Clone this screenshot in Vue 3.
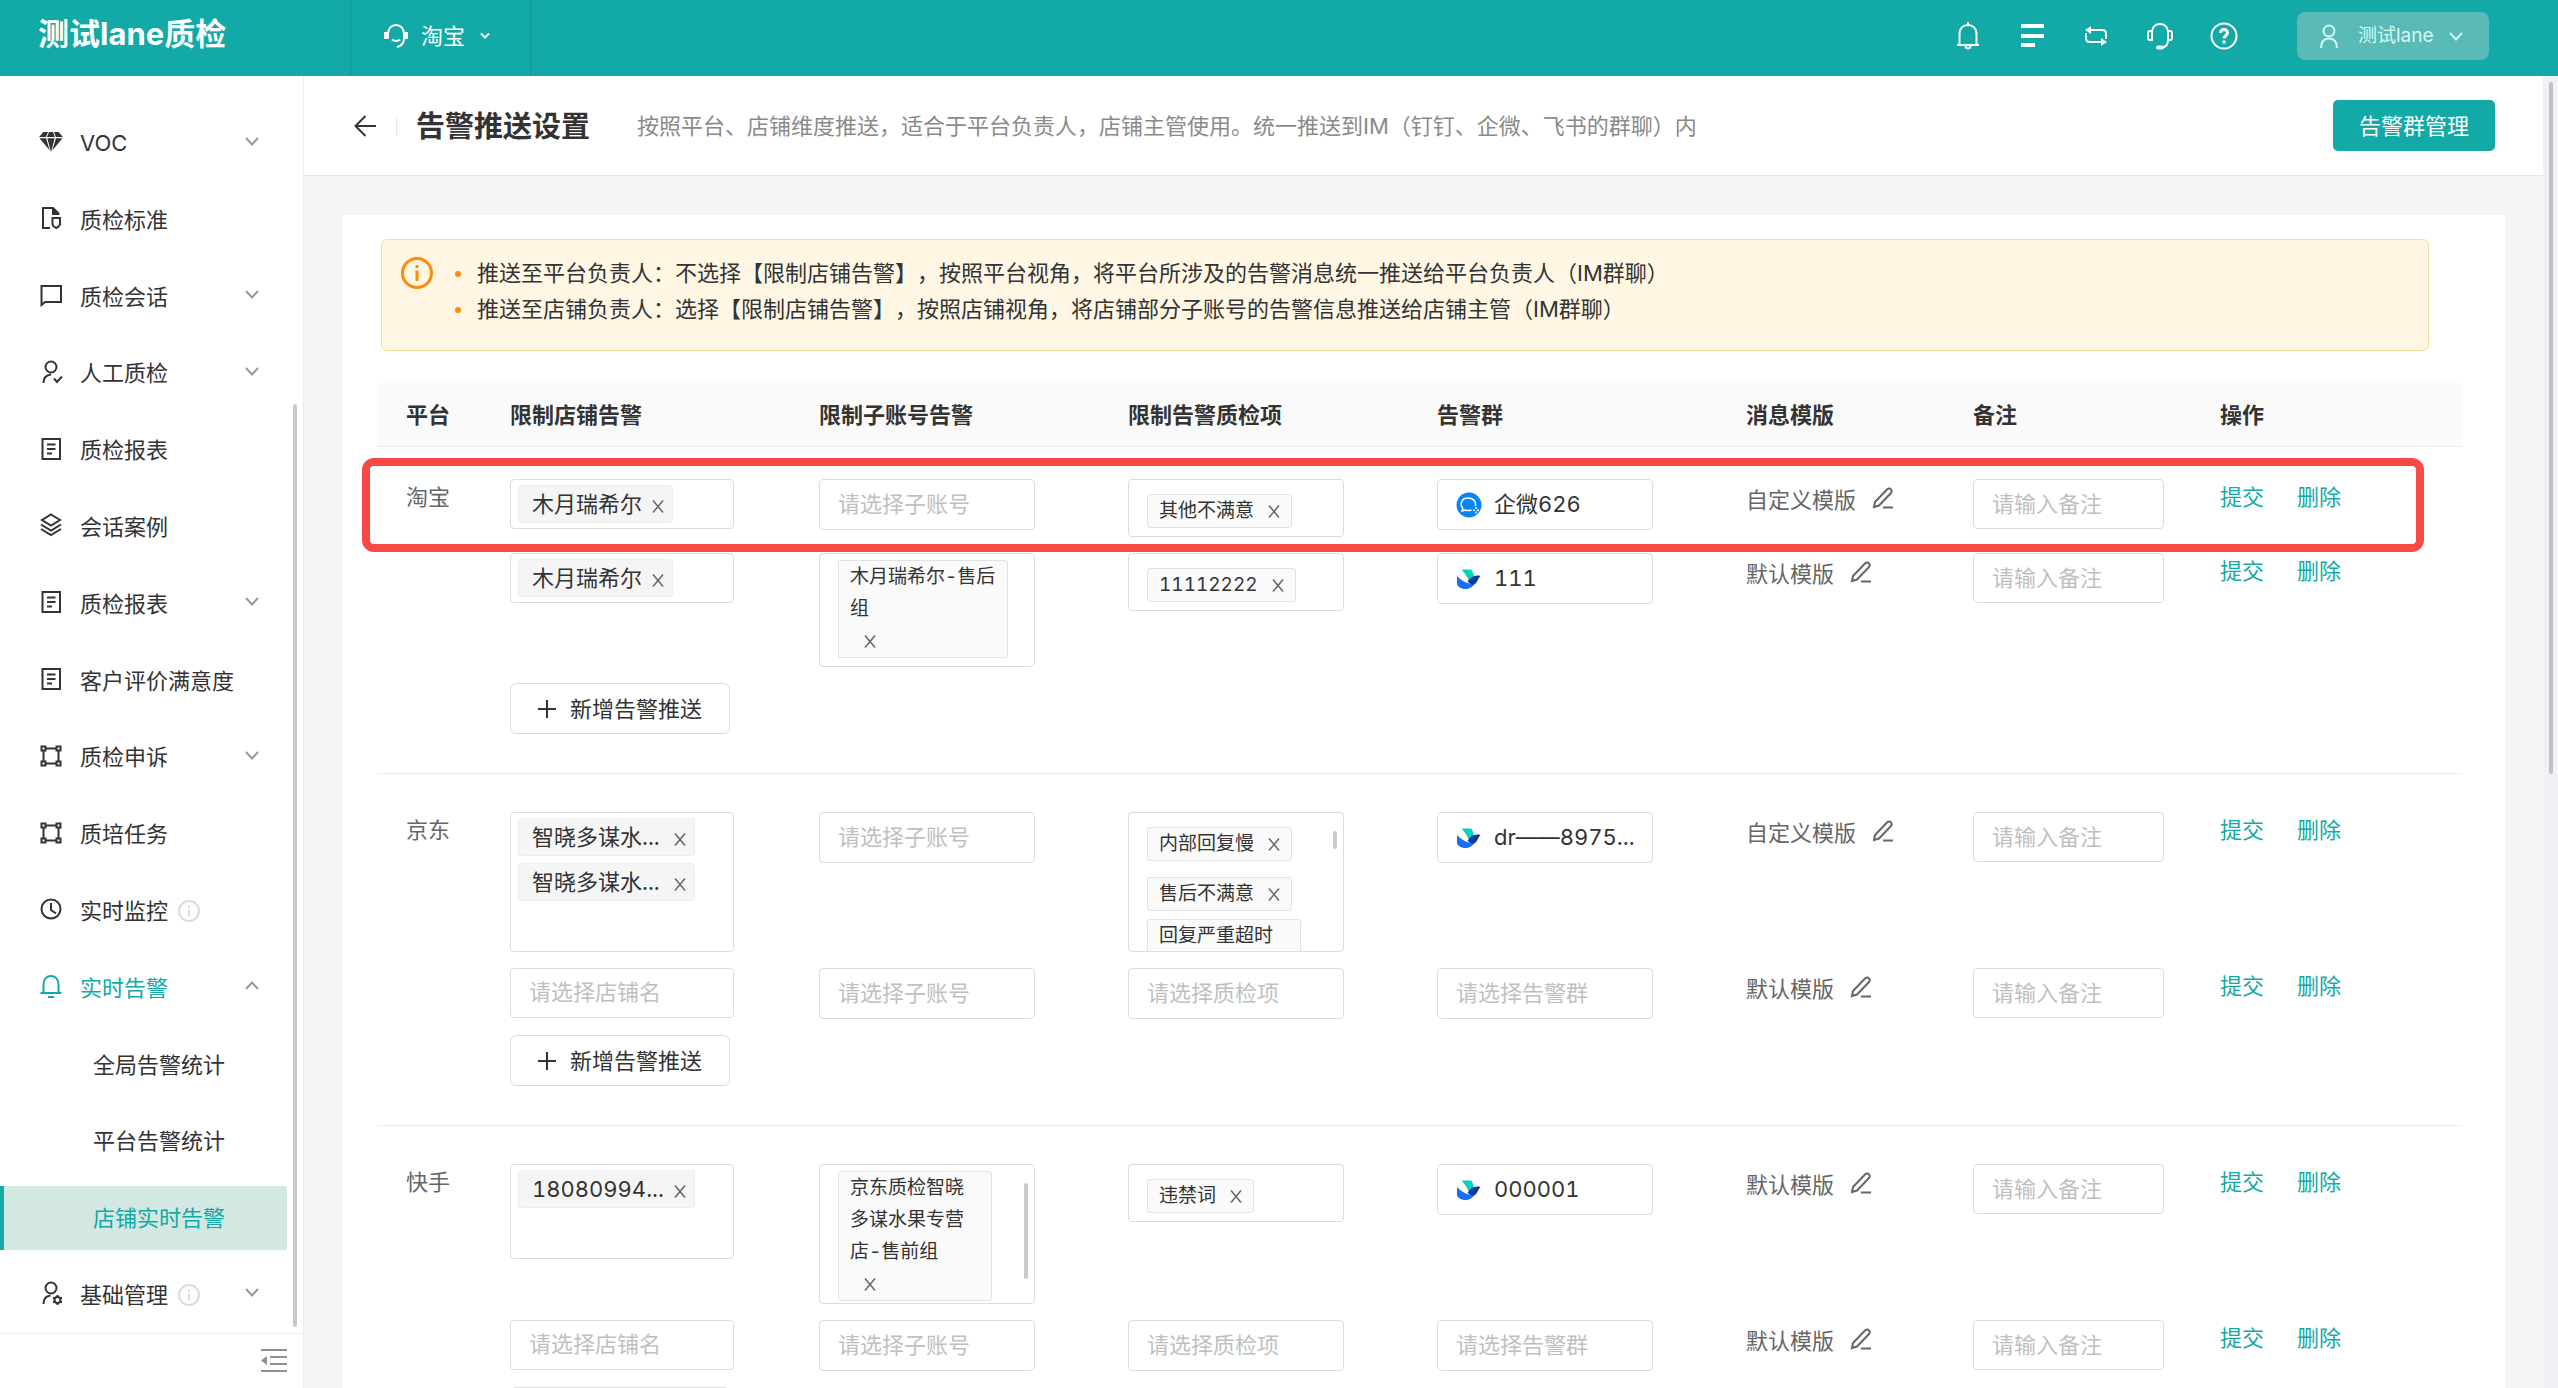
<script setup>
const menu = [
  { label: 'VOC', icon: 'diamond', arrow: 'down' },
  { label: '质检标准', icon: 'docShield' },
  { label: '质检会话', icon: 'chat', arrow: 'down' },
  { label: '人工质检', icon: 'userCheck', arrow: 'down' },
  { label: '质检报表', icon: 'report' },
  { label: '会话案例', icon: 'layers' },
  { label: '质检报表', icon: 'report', arrow: 'down' },
  { label: '客户评价满意度', icon: 'report' },
  { label: '质检申诉', icon: 'frame', arrow: 'down' },
  { label: '质培任务', icon: 'frame' },
  { label: '实时监控', icon: 'clock', info: true },
  { label: '实时告警', icon: 'alarm', arrow: 'up', open: true },
  { label: '全局告警统计', sub: true },
  { label: '平台告警统计', sub: true },
  { label: '店铺实时告警', sub: true, active: true },
  { label: '基础管理', icon: 'userGear', arrow: 'down', info: true },
]

const icons = {
  diamond:
    '<path fill="currentColor" d="M4.500 2H9L7 7H0zM10 2h4l2 5H8zM15 2h4.500L24 7h-7zM.5 8.300H7L10.800 20.500zM8.300 8.300h7.400L12 22zM17 8.300h6.500L13.200 20.500z"/>',
  docShield:
    '<path fill="none" stroke="currentColor" stroke-width="2" d="M11 22H4V2h10l6 6"/><path fill="currentColor" d="M13 1l8 8h-8z"/><path fill="none" stroke="currentColor" stroke-width="2" d="M13.500 12H21v6c0 2-2 3-3.700 4-1.800-1-3.800-2-3.800-4z"/>',
  chat: '<path fill="none" stroke="currentColor" stroke-width="2" d="M2.500 3h19.500v16H6l-3.500 3z"/>',
  userCheck:
    '<g fill="none" stroke="currentColor" stroke-width="2"><circle cx="12" cy="7" r="5.500"/><path d="M4.500 23c0-5 2.500-8 7.500-8.500M15 18.500l3 3.500 5-5.500"/></g>',
  report:
    '<g fill="none" stroke="currentColor" stroke-width="2"><path d="M3.500 2h17.500v20H3.500z"/><path d="M8 7.500h8.500M8 12h8.500M8 16.500h5"/></g>',
  layers:
    '<g fill="none" stroke="currentColor" stroke-width="2"><path d="M12 1.500l9 5.500-9 5.500L3 7z"/><path d="M2 11.500l10 6 10-6M2 16l10 6 10-6"/></g>',
  frame:
    '<g fill="none" stroke="currentColor" stroke-width="2"><path d="M2.500 2.500h4v4h-4zM17.500 2.500h4v4h-4zM2.500 17.500h4v4h-4zM17.500 17.500h4v4h-4zM6.500 4.500h11M6.500 19.500h11M4.500 6.500v11M19.500 6.500v11"/></g>',
  clock:
    '<g fill="none" stroke="currentColor" stroke-width="2"><circle cx="12" cy="12" r="9.500"/><path d="M12 6v7l5 3.500"/></g>',
  alarm:
    '<g fill="none" stroke="currentColor" stroke-width="2"><path d="M4.500 18v-8c0-5 3.500-8 7.500-8s7.500 3 7.500 8v8M1.500 19h21M9 23h6"/></g>',
  userGear:
    '<g fill="none" stroke="currentColor" stroke-width="2"><circle cx="12" cy="7" r="5.500"/><path d="M4.500 23c0-5 2.500-8 7-8.500"/><circle cx="18.500" cy="19" r="3"/><path d="M18.500 14v2M18.500 22v2M14 16.500l1.800 1M21.200 20.500l1.800 1M14 21.500l1.800-1M21.200 17.500l1.800-1"/></g>',
}

const S = '请选择店铺名'
const A = '请选择子账号'
const Q = '请选择质检项'
const G = '请选择告警群'

const groups = [
  {
    name: '淘宝',
    rows: [
      {
        shops: ['木月瑞希尔'],
        accounts: [],
        checks: [{ t: '其他不满意' }],
        chat: { kind: 'wecom', t: '企微626' },
        tpl: '自定义模版',
      },
      {
        shops: ['木月瑞希尔'],
        accounts: [{ t: '木月瑞希尔-售后组', multi: true }],
        checks: [{ t: '11112222' }],
        chat: { kind: 'lark', t: '111' },
        tpl: '默认模版',
      },
    ],
  },
  {
    name: '京东',
    rows: [
      {
        shops: ['智晓多谋水...', '智晓多谋水...'],
        shopSize: 'tall',
        accounts: [],
        checks: [{ t: '内部回复慢' }, { t: '售后不满意' }, { t: '回复严重超时', multi: true }],
        checkScroll: 'short',
        chat: { kind: 'lark', t: 'dr——8975...' },
        tpl: '自定义模版',
      },
      { shops: [], accounts: [], checks: [], tpl: '默认模版' },
    ],
  },
  {
    name: '快手',
    rows: [
      {
        shops: ['18080994...'],
        shopSize: 'mid',
        accounts: [{ t: '京东质检智晓多谋水果专营店-售前组', multi: true }],
        accountScroll: 'long',
        checks: [{ t: '违禁词' }],
        chat: { kind: 'lark', t: '000001' },
        tpl: '默认模版',
      },
      { shops: [], accounts: [], checks: [], tpl: '默认模版' },
    ],
  },
]
</script>

<template>
  <div class="app">
    <header class="topbar">
      <div class="brand">测试lane质检</div>
      <button class="platform" type="button">
        <svg class="i24" viewBox="0 0 24 24" fill="none" stroke="currentColor" stroke-width="2">
          <path d="M4 14.500V9.500C4 4.500 7.500 1 12 1s8 3.500 8 8.500v5c0 4.500-3 7.500-7 8.500" />
          <path d="M8 15.500c2 2 6 2 8 0" />
          <path d="M2 8v7M22 8v7" stroke-width="4" />
        </svg>
        <span>淘宝</span>
        <svg class="caret" viewBox="0 0 10 8" fill="none" stroke="currentColor" stroke-width="2"><path d="M1 1.500l4 4 4-4" /></svg>
      </button>
      <nav class="tools">
        <button type="button" aria-label="通知">
          <svg viewBox="0 0 28 28" fill="none" stroke="currentColor" stroke-width="2">
            <path d="M14 0v3M5.500 22V11.500C5.500 6.500 9 3 14 3s8.500 3.500 8.500 8.500V22M3 23h22M11.500 23.500a2.500 3 0 0 0 5 0" />
          </svg>
        </button>
        <button type="button" aria-label="列表">
          <svg viewBox="0 0 28 28" fill="currentColor"><path d="M3 2h23v4H3zM3 12h23v4H3zM3 21h14v4H3z" /></svg>
        </button>
        <button type="button" aria-label="切换">
          <svg viewBox="0 0 28 28" fill="none" stroke="currentColor" stroke-width="2">
            <path d="M7 8h13c3 0 4 2 4 4v5M21 20H8c-3 0-4-2-4-4v-5" />
            <path fill="currentColor" stroke="none" d="M3 8l6-4v8zM25 20l-6-4v8z" />
          </svg>
        </button>
        <button type="button" aria-label="客服">
          <svg viewBox="0 0 28 28" fill="none" stroke="currentColor" stroke-width="2">
            <path d="M6 18V10c0-5 3.500-8 8-8s8 3 8 8v8c0 4-2 7-6 7.500" />
            <path d="M6 9H4c-1.500 0-2 1-2 2v5c0 1 .5 2 2 2h2zM22 9h2c1.500 0 2 1 2 2v5c0 1-.5 2-2 2h-2z" />
            <path d="M12 25.500h4" stroke-width="4" stroke-linecap="round" />
          </svg>
        </button>
        <button type="button" aria-label="帮助">
          <svg viewBox="0 0 28 28" fill="none" stroke="currentColor" stroke-width="3">
            <circle cx="14" cy="14" r="12.500" stroke-width="2" />
            <path d="M10.500 11c0-2 1.500-3.500 3.500-3.500s3.500 1.500 3.500 3.300c0 2.700-3.500 2.700-3.500 5.700M14 18.500v3" />
          </svg>
        </button>
      </nav>
      <button class="account" type="button">
        <svg class="i24" viewBox="0 0 24 24" fill="none" stroke="currentColor" stroke-width="2">
          <circle cx="12" cy="7" r="5.500" />
          <path d="M4 24c0-6 3-9.500 8-9.500s8 3.500 8 9.500" />
        </svg>
        <span>测试lane</span>
        <svg class="chev" viewBox="0 0 14 9" fill="none" stroke="currentColor" stroke-width="2"><path d="M1 1l6 6.500L13 1" /></svg>
      </button>
    </header>

    <div class="body">
      <aside class="side">
        <nav class="menu">
          <a
            v-for="(m, i) in menu"
            :key="i"
            href="#"
            class="item"
            :class="{ sub: m.sub, active: m.active, open: m.open }"
          >
            <svg v-if="m.icon" class="i24" viewBox="0 0 24 24" v-html="icons[m.icon]"></svg>
            <span>{{ m.label }}</span>
            <svg v-if="m.info" class="info" viewBox="0 0 22 22" fill="none" stroke="currentColor" stroke-width="2">
              <circle cx="11" cy="11" r="10" /><path d="M11 9.500V16M11 5.500v2" />
            </svg>
            <svg v-if="m.arrow" class="arrow" viewBox="0 0 14 9" fill="none" stroke="currentColor" stroke-width="2">
              <path :d="m.arrow === 'up' ? 'M1 8l6-6.500L13 8' : 'M1 1l6 6.500L13 1'" />
            </svg>
          </a>
        </nav>
        <span class="side-thumb"></span>
        <div class="side-foot">
          <button type="button" aria-label="收起菜单">
            <svg viewBox="0 0 26 24" fill="currentColor">
              <path d="M0 0h26v2H0zM9 7h17v2H9zM9 14h17v2H9zM0 21h26v2H0zM0 11.500l6-4.500v9z" />
            </svg>
          </button>
        </div>
      </aside>

      <main class="main">
        <div class="page-head">
          <button class="back" type="button" aria-label="返回">
            <svg viewBox="0 0 22 22" fill="none" stroke="currentColor" stroke-width="2"><path d="M22 11H2M11.500 1L1.500 11l10 10" /></svg>
          </button>
          <span class="rule"></span>
          <h1>告警推送设置</h1>
          <p>按照平台、店铺维度推送，适合于平台负责人，店铺主管使用。统一推送到IM（钉钉、企微、飞书的群聊）内</p>
          <button class="primary" type="button">告警群管理</button>
        </div>

        <section class="card">
          <div class="notice">
            <svg viewBox="0 0 32 32" fill="none" stroke="currentColor">
              <circle cx="16" cy="16" r="14.500" stroke-width="3" />
              <path d="M16 13.500V24M16 8v3" stroke-width="3" />
            </svg>
            <ul>
              <li>推送至平台负责人：不选择【限制店铺告警】，按照平台视角，将平台所涉及的告警消息统一推送给平台负责人（IM群聊）</li>
              <li>推送至店铺负责人：选择【限制店铺告警】，按照店铺视角，将店铺部分子账号的告警信息推送给店铺主管（IM群聊）</li>
            </ul>
          </div>

          <div class="table-wrap">
            <table>
              <colgroup>
                <col class="c-plat" /><col class="c-box" /><col class="c-box" /><col class="c-box" />
                <col class="c-box" /><col class="c-tpl" /><col class="c-note" /><col class="c-act" />
              </colgroup>
              <thead>
                <tr>
                  <th>平台</th><th>限制店铺告警</th><th>限制子账号告警</th><th>限制告警质检项</th>
                  <th>告警群</th><th>消息模版</th><th>备注</th><th>操作</th>
                </tr>
              </thead>
              <tbody v-for="g in groups" :key="g.name">
                <tr v-for="(r, i) in g.rows" :key="i">
                  <td>{{ i === 0 ? g.name : '' }}</td>
                  <td>
                    <div v-if="r.shops.length" class="box shop" :class="r.shopSize">
                      <span v-for="(s, k) in r.shops" :key="k" class="shop-tag">
                        <span>{{ s }}</span>
                        <button class="x" type="button" aria-label="移除">
                          <svg viewBox="0 0 12 13" fill="none" stroke="currentColor" stroke-width="1.500"><path d="M1 .5l10 12M11 .5l-10 12" /></svg>
                        </button>
                      </span>
                    </div>
                    <select v-else class="box shop" :aria-label="S"><option>{{ S }}</option></select>
                  </td>
                  <td>
                    <div v-if="r.accounts.length" class="box tags" :class="r.accountScroll">
                      <span v-for="t in r.accounts" :key="t.t" class="tag" :class="{ multi: t.multi }">
                        <span class="tag-text">{{ t.t }}</span>
                        <button class="x" type="button" aria-label="移除">
                          <svg viewBox="0 0 12 13" fill="none" stroke="currentColor" stroke-width="1.500"><path d="M1 .5l10 12M11 .5l-10 12" /></svg>
                        </button>
                      </span>
                      <span v-if="r.accountScroll" class="thumb"></span>
                    </div>
                    <select v-else class="box" :aria-label="A"><option>{{ A }}</option></select>
                  </td>
                  <td>
                    <div v-if="r.checks.length" class="box tags" :class="r.checkScroll">
                      <span v-for="t in r.checks" :key="t.t" class="tag" :class="{ multi: t.multi }">
                        <span class="tag-text">{{ t.t }}</span>
                        <button class="x" type="button" aria-label="移除">
                          <svg viewBox="0 0 12 13" fill="none" stroke="currentColor" stroke-width="1.500"><path d="M1 .5l10 12M11 .5l-10 12" /></svg>
                        </button>
                      </span>
                      <span v-if="r.checkScroll" class="thumb"></span>
                    </div>
                    <select v-else class="box" :aria-label="Q"><option>{{ Q }}</option></select>
                  </td>
                  <td>
                    <div v-if="r.chat" class="box chat">
                      <svg v-if="r.chat.kind === 'wecom'" viewBox="0 0 26 26">
                        <circle cx="13" cy="13" r="12.500" fill="#0a84f5" />
                        <g fill="none" stroke="#fff" stroke-width="1.500">
                          <path d="M15.500 18c-2 .8-4 .8-6 0L6 19l.8-2.800C3.500 12.500 5.500 6 12 6c5.500 0 8.500 4 7.300 8" />
                          <path d="M20 15v2M20 19.500v2M17 18.300h2M21 18.300h2" />
                        </g>
                      </svg>
                      <svg v-else viewBox="0 0 26 26">
                        <path fill="#00d6b9" d="M5.500 3.500h9.500c1.500 1.500 2.500 4 3 6.500L13 14.500C11 10.500 8.500 6.500 5.500 3.500z" />
                        <path fill="#1a6dff" d="M1 10c3.500 3.500 7 6 10.500 7 3 .8 6 1 8-.5-2 4-6 6.500-10 6.500-5 0-8.500-2.500-8.500-6z" />
                        <path fill="#0a3a9e" d="M11.500 15.500C15 11 18.500 8.500 24.500 10c-2 1.500-2.500 4.500-4.500 7-2.500 2.500-5.500 1.500-8.500-1.500z" />
                      </svg>
                      <select aria-label="告警群"><option>{{ r.chat.t }}</option></select>
                    </div>
                    <select v-else class="box" :aria-label="G"><option>{{ G }}</option></select>
                  </td>
                  <td>
                    <div class="tpl">
                      <span>{{ r.tpl }}</span>
                      <button type="button" aria-label="编辑模版">
                        <svg viewBox="0 0 22 22" fill="none" stroke="currentColor" stroke-width="2">
                          <path d="M2 20l1-5L15 2.500c1.500-1.500 3-1 4 0s1 2.500 0 3.500L7 18.500zM11 20.500h10" />
                        </svg>
                      </button>
                    </div>
                  </td>
                  <td><input class="box note" type="text" placeholder="请输入备注" aria-label="备注" /></td>
                  <td>
                    <div class="acts"><a href="#">提交</a><a href="#">删除</a></div>
                  </td>
                </tr>
                <tr class="add-row">
                  <td></td>
                  <td colspan="7">
                    <button class="add" type="button">
                      <svg viewBox="0 0 18 18" fill="none" stroke="currentColor" stroke-width="2"><path d="M9 0v18M0 9h18" /></svg>
                      <span>新增告警推送</span>
                    </button>
                  </td>
                </tr>
              </tbody>
            </table>
            <div class="highlight"></div>
          </div>
        </section>
        <div class="track"><span class="track-thumb"></span></div>
      </main>
    </div>
  </div>
</template>

<style>
html,
body {
  margin: 0;
  background: #f4f6f5;
}
</style>

<style scoped>
.app,
.app * {
  box-sizing: border-box;
}
.app {
  height: 100vh;
  overflow: hidden;
  display: flex;
  flex-direction: column;
  font-family: Inter, 'Noto Sans CJK SC', sans-serif;
  font-size: 22px;
  font-variant-numeric: tabular-nums;
  text-spacing-trim: space-all;
  line-height: 36px;
  color: #333;
}
button,
select,
input {
  font: inherit;
  font-variant-numeric: inherit;
  color: inherit;
  background: none;
  border: 0;
  padding: 0;
  margin: 0;
}
select {
  appearance: none;
}
a {
  color: inherit;
  text-decoration: none;
}
svg {
  display: block;
  flex: none;
}
.i24 {
  width: 24px;
  height: 24px;
}

/* top bar */
.topbar {
  flex: none;
  height: 76px;
  display: flex;
  align-items: center;
  padding-right: 69px;
  background: #12a9a7;
  color: #fff;
}
.brand {
  width: 350px;
  padding: 0 0 8px 38px;
  font-size: 31px;
  font-weight: 700;
}
.platform {
  align-self: stretch;
  width: 181px;
  display: flex;
  align-items: center;
  padding: 0 0 4px 33px;
  border-left: 1px solid #109896;
  border-right: 1px solid #109896;
}
.platform span {
  margin: 0 15px 0 13px;
}
.caret {
  width: 10px;
  height: 8px;
}
.tools {
  margin-left: auto;
  margin-right: 59px;
  padding-bottom: 5px;
  display: flex;
  gap: 36px;
}
.tools svg {
  width: 28px;
  height: 28px;
}
.account {
  width: 192px;
  height: 48px;
  margin-bottom: 4px;
  padding: 0 26px 0 20px;
  display: flex;
  align-items: center;
  border-radius: 8px;
  background: #59bab8;
  color: #cffaf6;
  font-size: 19px;
}
.account .chev {
  width: 14px;
  height: 9px;
  margin-left: auto;
}
.account span {
  margin-left: 17px;
}

/* side menu */
.body {
  flex: 1;
  min-height: 0;
  display: flex;
}
.side {
  position: relative;
  flex: none;
  width: 304px;
  display: flex;
  flex-direction: column;
  background: #fff;
  border-right: 1px solid #eceeed;
}
.menu {
  flex: 1;
  min-height: 0;
  display: flex;
  flex-direction: column;
  justify-content: space-between;
  padding: 35px 16px 6px 0;
}
.item {
  height: 64px;
  display: flex;
  align-items: center;
  padding: 0 28px 0 39px;
}
.item .i24 {
  margin: 0 17px 3px 0;
}
.item.open {
  color: #12a9a7;
}
.item.sub {
  padding-left: 93px;
}
.item.active {
  padding-left: 89px;
  border-left: 4px solid #12a9a7;
  background: #d3e8e2;
  color: #12a9a7;
}
.info {
  width: 22px;
  height: 22px;
  margin-left: 10px;
  color: #dcdcdc;
}
.arrow {
  width: 14px;
  height: 9px;
  margin: 0 0 4px auto;
  color: #999;
}
.side-thumb {
  position: absolute;
  right: 6px;
  top: 328px;
  bottom: 61px;
  width: 4px;
  border-radius: 2px;
  background: #c9c9c9;
}
.side-foot {
  flex: none;
  height: 55px;
  display: flex;
  justify-content: flex-end;
  align-items: center;
  padding-right: 16px;
  border-top: 1px solid #eceeed;
  color: #8f8f8f;
}
.side-foot svg {
  width: 26px;
  height: 24px;
}

/* page */
.main {
  position: relative;
  flex: 1;
  min-width: 0;
  overflow: hidden;
  padding-right: 15px;
}
.page-head {
  height: 100px;
  display: flex;
  align-items: center;
  padding: 0 48px 0 50px;
  background: #fff;
  border-bottom: 1px solid #e6e8e7;
  white-space: nowrap;
}
.back svg {
  width: 22px;
  height: 22px;
}
.rule {
  width: 1px;
  height: 20px;
  margin: 0 19px 0 20px;
  background: #e8e8e8;
}
h1 {
  margin: 0;
  padding-top: 2px;
  font-size: 29px;
  font-weight: 600;
}
.page-head p {
  margin: 0 0 0 47px;
  color: #8a8a8a;
}
.primary {
  width: 162px;
  height: 51px;
  margin-left: auto;
  border-radius: 5px;
  background: #12a9a7;
  color: #fff;
}
.card {
  margin: 39px 38px 0;
  padding: 24px 43px 60px 35px;
  background: #fff;
}
.notice {
  height: 112px;
  margin: 0 33px 0 4px;
  padding: 15px 19px;
  display: flex;
  border: 1px solid #fbdc9a;
  border-radius: 6px;
  background: #fff6e4;
}
.notice svg {
  width: 32px;
  height: 32px;
  margin-top: 2px;
  color: #ff8a0a;
}
.notice ul {
  margin: 0;
  padding: 0;
  list-style: none;
}
.notice li {
  display: flex;
  align-items: center;
}
.notice li::before {
  content: '';
  width: 6px;
  height: 6px;
  margin: 2px 16px 0 22px;
  border-radius: 3px;
  background: #ff8a0a;
}

/* table */
.table-wrap {
  position: relative;
  margin-top: 32px;
}
table {
  width: 100%;
  table-layout: fixed;
  border-collapse: separate;
  border-spacing: 0;
}
.c-plat {
  width: 133px;
}
.c-box {
  width: 309px;
}
.c-tpl {
  width: 227px;
}
.c-note {
  width: 247px;
}
.c-act {
  width: 242px;
}
th {
  height: 64px;
  padding: 0;
  text-align: left;
  font-weight: 600;
  background: #fafafa;
  border-bottom: 1px solid #ececec;
}
th:first-child,
td:first-child {
  padding-left: 29px;
}
td {
  padding: 0 0 16px;
  vertical-align: top;
  color: #666;
}
tbody tr:first-child td {
  padding-top: 38px;
}
thead + tbody tr:first-child td {
  padding-top: 32px;
}
.add-row td {
  padding-bottom: 39px;
  border-bottom: 1px solid #ececec;
}
.box {
  display: block;
  width: 216px;
  height: 51px;
  border: 1px solid #dcdcdc;
  border-radius: 4px;
  background: #fff;
}
select.box,
.note {
  padding: 0 18px 2px;
  color: #bfbfbf;
}
.note {
  width: 191px;
  height: 50px;
  padding-bottom: 0;
}
.note::placeholder {
  color: #bfbfbf;
  opacity: 1;
}
.box.shop {
  width: 224px;
  height: 50px;
}
div.shop {
  display: flex;
  flex-direction: column;
  align-items: flex-start;
  gap: 7px;
  padding: 5px 7px;
}
.box.shop.tall {
  height: 140px;
}
.box.shop.mid {
  height: 95px;
}
.shop-tag {
  height: 38px;
  display: flex;
  align-items: center;
  padding: 0 8px 1px 13px;
  border: 1px solid #eee;
  border-radius: 3px;
  background: #f5f5f5;
  color: #333;
}
.x {
  display: inline-block;
  width: 12px;
  color: #666;
}
.x svg {
  width: 12px;
  height: 13px;
}
.shop-tag .x {
  margin: 5px 0 0 10px;
}
.tall .x {
  margin-left: 14px;
}
.box.tags {
  position: relative;
  height: auto;
  max-height: 140px;
  overflow: hidden;
  display: flex;
  flex-direction: column;
  align-items: flex-start;
  padding: 6px 26px 0 18px;
}
.box.tags.short,
.box.tags.long {
  padding-right: 42px;
}
.tag {
  flex: none;
  max-width: 100%;
  margin: 8px 0;
  padding: 0 11px;
  border: 1px solid #e2e2e2;
  border-radius: 3px;
  background: #fafafa;
  color: #333;
  font-size: 19px;
  line-height: 32px;
}
.tag.multi {
  margin-top: 0;
}
.tag-text {
  display: inline-block;
  max-width: 100%;
  vertical-align: top;
}
.tag .x {
  height: 32px;
  margin-left: 14px;
  vertical-align: top;
}
.thumb {
  position: absolute;
  top: 18px;
  right: 6px;
  width: 4px;
  height: 18px;
  border-radius: 2px;
  background: #c9c9c9;
}
.long .thumb {
  height: 96px;
}
.chat {
  display: flex;
  align-items: center;
  padding: 0 8px 0 18px;
}
.chat svg {
  width: 26px;
  height: 26px;
}
.chat select {
  flex: 1;
  min-width: 0;
  margin-left: 12px;
  padding-bottom: 2px;
  color: #333;
}
.tpl {
  display: flex;
  align-items: center;
  height: 42px;
}
.tpl button {
  margin: 0 0 4px 16px;
}
.tpl svg {
  width: 22px;
  height: 22px;
}
.acts {
  display: flex;
  gap: 33px;
  color: #12a9a7;
}
.add {
  width: 220px;
  height: 51px;
  display: flex;
  align-items: center;
  padding: 0 27px;
  border: 1px solid #dcdcdc;
  border-radius: 6px;
  color: #333;
  white-space: nowrap;
}
.add svg {
  width: 18px;
  height: 18px;
  margin-right: 14px;
}
.highlight {
  position: absolute;
  left: -15px;
  right: 38px;
  top: 75px;
  height: 94px;
  border: 8px solid #f74a46;
  border-radius: 12px;
  pointer-events: none;
}
.track {
  position: absolute;
  top: 0;
  right: 0;
  bottom: 0;
  width: 15px;
  padding: 6px 5px 0 6px;
  background: #eff1f5;
}
.track-thumb {
  display: block;
  width: 4px;
  height: 53%;
  border-radius: 2px;
  background: #bfc1c5;
}
</style>
